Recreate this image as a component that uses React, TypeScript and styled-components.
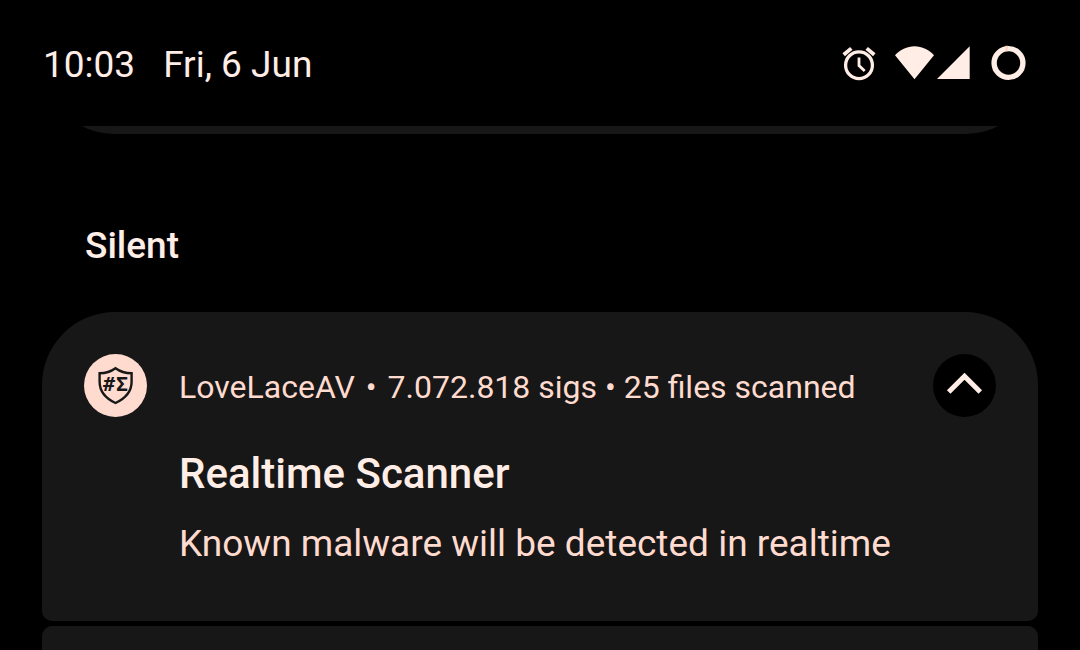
import React from "react";
import styled, { createGlobalStyle } from "styled-components";

const colors = {
  background: "#000000",
  surface: "#171717",
  primary: "#ffede6",
  secondary: "#ffdbcf",
};

const GlobalStyle = createGlobalStyle`
  * { box-sizing: border-box; }
  body {
    margin: 0;
    background: ${colors.background};
    color: ${colors.primary};
    font-family: Roboto, "Liberation Sans", sans-serif;
  }
`;

const Shade = styled.div`
  display: flex;
  flex-direction: column;
  height: 100vh;
  overflow: hidden;
`;

const StatusBar = styled.header`
  display: flex;
  flex: none;
  align-items: center;
  justify-content: space-between;
  height: 126px;
  padding: 0 54px 0 43px;
`;

const Clock = styled.div`
  display: flex;
  gap: 28px;
  padding-top: 4px;
  font-size: 37px;
  line-height: 44px;
  white-space: nowrap;
`;

const StatusIcons = styled.div`
  display: flex;
  align-items: center;
`;

const StatusIcon = styled.svg<{ $gap?: number }>`
  display: block;
  flex: none;
  margin-left: ${({ $gap = 0 }) => $gap}px;
  fill: ${colors.primary};
`;

const Stack = styled.main`
  display: flex;
  flex: 1;
  flex-direction: column;
  min-height: 0;
  padding: 0 42px;
`;

const ScrolledAway = styled.div`
  display: flex;
  flex: none;
  flex-direction: column;
  justify-content: flex-end;
  height: 8px;
  overflow: hidden;
`;

const Card = styled.article<{ $top: number; $bottom: number }>`
  flex: none;
  background: ${colors.surface};
  border-radius: ${({ $top, $bottom }) => `${$top}px ${$top}px ${$bottom}px ${$bottom}px`};
`;

const PreviousCard = styled(Card)`
  height: 160px;
`;

const NextCard = styled(Card)`
  height: 160px;
  margin-top: 5px;
`;

const SectionTitle = styled.h2`
  margin: 90px 0 44px;
  padding: 0 43px;
  font-size: 37px;
  font-weight: 500;
  line-height: 44px;
`;

const Notification = styled(Card)`
  display: grid;
  grid-template-columns: 63px 1fr 63px;
  column-gap: 32px;
  align-items: start;
  padding: 42px 42px 55px;
`;

const AppBadge = styled.svg`
  display: block;
`;

const Content = styled.div`
  min-width: 0;
  white-space: nowrap;
`;

const Meta = styled.div`
  display: flex;
  gap: 11px;
  align-items: center;
  height: 66px;
  color: ${colors.secondary};
  font-size: 32px;
  line-height: 40px;
`;

const Title = styled.h3`
  margin: 29px 0 0;
  font-size: 42px;
  font-weight: 500;
  line-height: 50px;
`;

const Message = styled.p`
  margin: 23px 0 0;
  color: ${colors.secondary};
  font-size: 37px;
  line-height: 44px;
`;

const CollapseButton = styled.button`
  display: block;
  width: 63px;
  height: 63px;
  padding: 0;
  border: 0;
  border-radius: 50%;
  background: ${colors.background};
  cursor: pointer;
`;

const Chevron = styled.svg`
  display: block;
  fill: none;
  stroke: ${colors.primary};
  stroke-width: 5;
`;

const BadgeText = styled.text`
  fill: ${colors.surface};
  font-family: "DejaVu Sans Mono", monospace;
  font-size: 20px;
  font-weight: 700;
`;

export default function App() {
  return (
    <>
      <GlobalStyle />
      <Shade>
        <StatusBar>
          <Clock>
            <time>10:03</time>
            <span>Fri, 6 Jun</span>
          </Clock>
          <StatusIcons>
            <StatusIcon width="34" height="36" viewBox="0 0 34 36" aria-label="Alarm set">
              <g fill="none" stroke={colors.primary}>
                <circle cx="17" cy="20.2" r="13.4" strokeWidth="3.3" />
                <path d="M17 12.4v8.2l5.7 5.4" strokeWidth="2.8" />
                <path d="M1.7 9.8L9.3 3.4M32.3 9.8L24.7 3.4" strokeWidth="3.8" />
              </g>
            </StatusIcon>
            <StatusIcon $gap={19} width="39" height="36" viewBox="0 0 39 36" aria-label="Wi-Fi">
              <path d="M19.5 34.2L0 10.2C5 4.9 12 1.2 19.5 1.2S34 4.9 39 10.2z" />
            </StatusIcon>
            <StatusIcon $gap={3} width="33" height="36" viewBox="0 0 33 36" aria-label="Mobile signal">
              <path d="M0 34L32.7 1.2v32.8z" />
            </StatusIcon>
            <StatusIcon $gap={21} width="35" height="36" viewBox="0 0 35 36" aria-label="Battery">
              <circle cx="17.5" cy="18" r="14.4" fill="none" stroke={colors.primary} strokeWidth="5.4" />
              <path d="M14.3 .8h2.6v5.4h-2.6z" fill="#ffd5c5" />
            </StatusIcon>
          </StatusIcons>
        </StatusBar>
        <Stack>
          <ScrolledAway>
            <PreviousCard $top={10} $bottom={73} />
          </ScrolledAway>
          <SectionTitle>Silent</SectionTitle>
          <Notification $top={73} $bottom={10}>
            <AppBadge width="63" height="63" viewBox="0 0 63 63" aria-label="LoveLaceAV">
              <circle cx="31.5" cy="31.5" r="31.5" fill={colors.secondary} />
              <path
                d="M31.5 14.2C27 17.5 21.5 19.2 15.6 19.3v8.4C15.6 37.5 22 44.5 31.5 49 41 44.5 47.6 37.5 47.6 27.7v-8.4C41.5 19.2 36 17.5 31.5 14.2z"
                fill="none"
                stroke={colors.surface}
                strokeWidth="2.4"
              />
              <BadgeText x="19" y="37">#</BadgeText>
              <BadgeText x="32" y="37">Σ</BadgeText>
            </AppBadge>
            <Content>
              <Meta>
                <span>LoveLaceAV</span>
                <span>•</span>
                <span>7.072.818 sigs • 25 files scanned</span>
              </Meta>
              <Title>Realtime Scanner</Title>
              <Message>Known malware will be detected in realtime</Message>
            </Content>
            <CollapseButton type="button" aria-label="Collapse">
              <Chevron width="63" height="63" viewBox="0 0 63 63">
                <path d="M15.7 38L31.5 22.2 47.3 38" />
              </Chevron>
            </CollapseButton>
          </Notification>
          <NextCard $top={10} $bottom={10} />
        </Stack>
      </Shade>
    </>
  );
}
